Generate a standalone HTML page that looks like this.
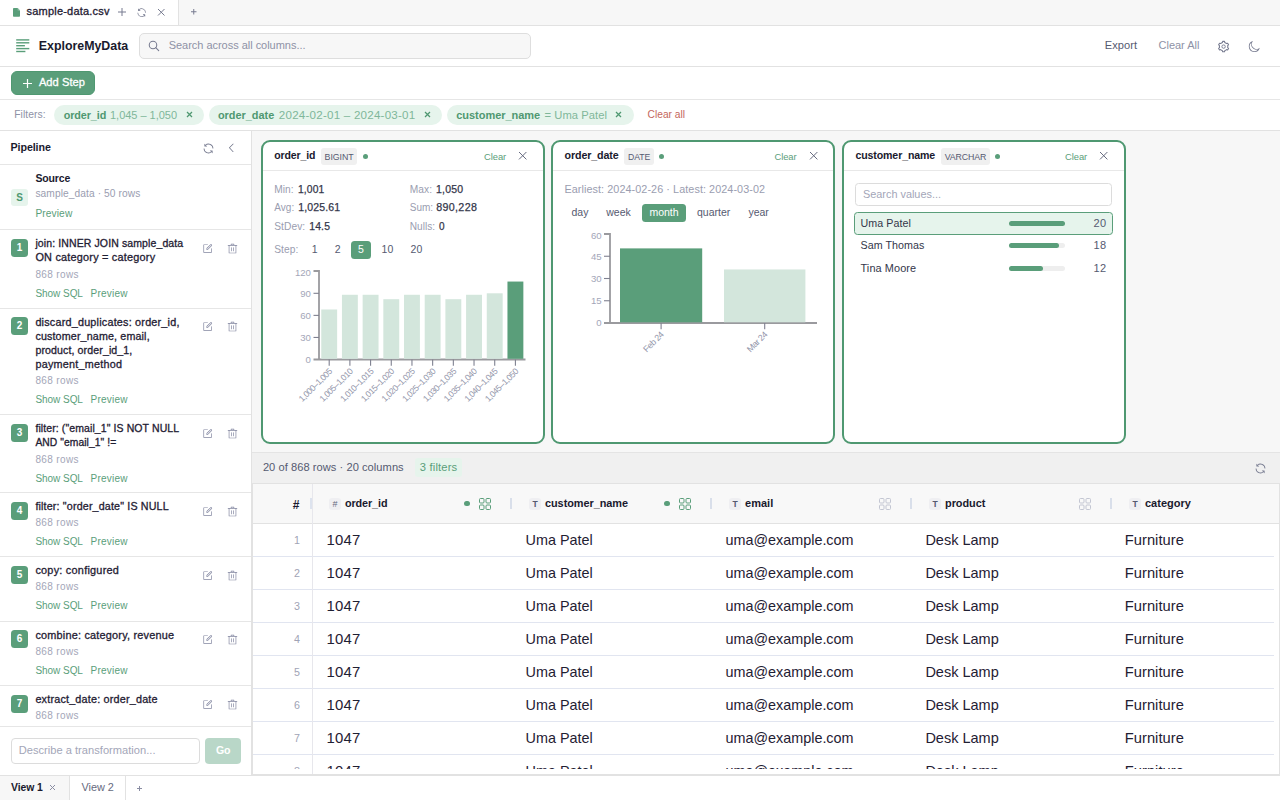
<!DOCTYPE html>
<html>
<head>
<meta charset="utf-8">
<title>ExploreMyData</title>
<style>
*{box-sizing:border-box;margin:0;padding:0}
html,body{width:1280px;height:800px;overflow:hidden;background:#fff}
body{font-family:"Liberation Sans",sans-serif;color:#1f2033;position:relative;font-size:11px}
.abs{position:absolute}
.t{position:absolute;white-space:nowrap;line-height:1}
svg{position:absolute;overflow:visible}
.g{color:#5a9e7a}
.mut{color:#9a9db0}
/* top tab bar */
#tabbar{left:0;top:0;width:1280px;height:26px;background:#f7f7f7;border-bottom:1px solid #e2e2e2}
#tab1{left:0;top:0;width:179px;height:25px;background:#fff;border-right:1px solid #e2e2e2}
/* header */
#header{left:0;top:26px;width:1280px;height:41px;background:#fff;border-bottom:1px solid #e2e2e2}
#search{left:139px;top:33px;width:392px;height:26px;background:#f7f7f7;border:1px solid #dedede;border-radius:5px}
/* toolbar */
#toolbar{left:0;top:67px;width:1280px;height:33px;border-bottom:1px solid #e6e6e6;background:#fff}
#addstep{left:11px;top:71px;width:84px;height:24px;background:#5a9e7a;border:1px solid #4f9871;border-radius:6px}
/* filters */
#filters{left:0;top:100px;width:1280px;height:31px;border-bottom:1px solid #e2e2e2;background:#fff}
.chip{position:absolute;top:105px;height:20px;border-radius:10px;background:#e6f4ec}
/* sidebar */
#sidebar{left:0;top:131px;width:252px;height:644px;background:#fff;border-right:1px solid #e2e2e2}
.hl{position:absolute;left:0;width:251px;height:1px;background:#e6e6e6}
.badge{position:absolute;left:11px;width:17px;height:17.5px;border-radius:3.5px;background:#5a9e7a;color:#fff;font-weight:bold;font-size:10px;text-align:center;line-height:17.5px}
.st{position:absolute;left:35px;font-size:10.5px;line-height:13.5px;color:#1f2033;white-space:nowrap}
.rows{position:absolute;left:35px;font-size:10px;line-height:1;color:#a3a6b8;white-space:nowrap}
.lnk{position:absolute;font-size:10px;line-height:1;color:#5a9e7a;white-space:nowrap}
/* main */
#panels{left:252px;top:131px;width:1028px;height:322px;background:#f7f7f7;border-bottom:1px solid #e4e4e4}
.card{position:absolute;top:140px;width:284px;height:304px;border:2px solid #4f9871;border-radius:9px;background:#fff}
.chead{position:absolute;left:0;top:0;width:280px;height:29px;border-bottom:1px solid #e8e8e8}
.tbadge{position:absolute;background:#f0f0f0;border-radius:3px;font-size:9px;color:#555a70;line-height:16px;height:16px;text-align:center}
#status{left:252px;top:453px;width:1028px;height:31px;background:#f0f0f0;border-bottom:1px solid #e2e2e2}
#table{left:252px;top:484px;width:1028px;height:291px;background:#fff;border-left:1px solid #e2e2e2;border-right:1px solid #e2e2e2;border-bottom:1px solid #e2e2e2;overflow:hidden}
#thead{left:0;top:0;width:1026px;height:40px;background:#f8f8f8;border-bottom:1px solid #e2e2e2}
.row{position:absolute;left:0;width:1021px;height:33px;border-bottom:1px solid #e1e5f0}
.rn{position:absolute;right:973px;top:11px;font-size:11px;color:#a0a3b5;line-height:1}
.c{position:absolute;top:8px;font-size:14px;line-height:16px;color:#1f2033;white-space:nowrap}
#numcol{left:59px;top:0;width:1px;height:291px;background:#e7e7ec}
/* bottom */
#bottombar{left:0;top:775px;width:1280px;height:25px;background:#fff;border-top:1px solid #e2e2e2}
</style>
</head>
<body>
<!-- TAB BAR -->
<div class="abs" id="tabbar"></div>
<div class="abs" id="tab1"></div>
<svg style="left:13px;top:7.9px" width="7" height="8.7" viewBox="0 0 7 8.7"><path d="M0.8 0H4.6L7 2.4V7.9Q7 8.7 6.2 8.7H0.8Q0 8.7 0 7.9V0.8Q0 0 0.8 0Z" fill="#5a9e7a"/><path d="M4.6 0V2.4H7Z" fill="#8fc0a6"/></svg>
<div class="t" style="top:6px;font-size:11.0px;color:#1f2033;left:26.60px;letter-spacing:0.194px;-webkit-text-stroke:0.3px #1f2033;">sample-data.csv</div>
<svg style="left:118.1px;top:8.2px" width="8" height="8" viewBox="0 0 8 8"><path d="M4.0 0V8M0 4.0H8" stroke="#777b90" stroke-width="1.0" fill="none"/></svg>
<svg style="left:135.54px;top:6.54px" width="11.309999999999999" height="11.309999999999999" viewBox="0 0 1024 1024"><path d="M771.776 794.88A384 384 0 0 1 128 512h64a320 320 0 0 0 555.712 216.448H654.72a32 32 0 1 1 0-64h149.056a32 32 0 0 1 32 32v148.928a32 32 0 1 1-64 0v-50.56zM276.288 295.616h92.992a32 32 0 0 1 0 64H220.16a32 32 0 0 1-32-32V178.56a32 32 0 0 1 64 0v50.56A384 384 0 0 1 896.128 512h-64a320 320 0 0 0-555.776-216.384z" fill="#777b90"/></svg>
<svg style="left:158.05px;top:8.95px" width="6.5" height="6.5" viewBox="0 0 6.5 6.5"><path d="M0 0L6.5 6.5M6.5 0L0 6.5" stroke="#777b90" stroke-width="1.0" fill="none"/></svg>
<svg style="left:190.75px;top:9.35px" width="5.5" height="5.5" viewBox="0 0 5.5 5.5"><path d="M2.75 0V5.5M0 2.75H5.5" stroke="#777b90" stroke-width="1.0" fill="none"/></svg>

<!-- HEADER -->
<div class="abs" id="header"></div>
<div class="abs" id="search"></div>
<svg style="left:0;top:0" width="40" height="60" viewBox="0 0 40 60"><rect x="16.2" y="39.20" width="13.1" height="1.4" fill="#5a9e7a"/><rect x="16.2" y="42.10" width="13.1" height="1.4" fill="#5a9e7a"/><rect x="16.2" y="45.00" width="8.7" height="1.4" fill="#5a9e7a"/><rect x="16.2" y="47.90" width="13.1" height="1.4" fill="#5a9e7a"/><rect x="16.2" y="50.80" width="9.2" height="1.4" fill="#5a9e7a"/></svg>
<div class="t" style="top:40px;font-size:12.4px;color:#1a1a2e;left:38.80px;font-weight:bold;letter-spacing:-0.014px;">ExploreMyData</div>
<svg style="left:140px;top:32px" width="30" height="30" viewBox="0 0 30 30"><circle cx="13.0" cy="12.95" r="3.75" fill="none" stroke="#777b90" stroke-width="1.05"/><path d="M15.75 15.7L18.7 18.7" stroke="#777b90" stroke-width="1.1" stroke-linecap="round"/></svg>
<div class="t" style="top:40px;font-size:11.0px;color:#8e92a6;left:168.70px;letter-spacing:-0.027px;">Search across all columns...</div>
<div class="t" style="top:40px;font-size:11.1px;color:#555a70;left:1104.80px;letter-spacing:0.020px;">Export</div>
<div class="t" style="top:40px;font-size:11.0px;color:#8e92a6;left:1158.60px;letter-spacing:-0.029px;">Clear All</div>
<svg style="left:1218.4px;top:40.7px" width="11.2" height="11.2" viewBox="0 0 11.2 11.2"><path d="M3.50 1.96L4.43 1.57L4.66 0.38L6.54 0.38L6.77 1.57L7.70 1.96L7.70 1.96L8.51 2.57L9.65 2.18L10.59 3.80L9.68 4.60L9.80 5.60L9.80 5.60L9.68 6.60L10.59 7.40L9.65 9.02L8.51 8.63L7.70 9.24L7.70 9.24L6.77 9.63L6.54 10.82L4.66 10.82L4.43 9.63L3.50 9.24L3.50 9.24L2.69 8.63L1.55 9.02L0.61 7.40L1.52 6.60L1.40 5.60L1.40 5.60L1.52 4.60L0.61 3.80L1.55 2.18L2.69 2.57L3.50 1.96Z" fill="none" stroke="#777b90" stroke-width="1.05" stroke-linejoin="round"/><circle cx="5.6" cy="5.6" r="1.7" fill="none" stroke="#777b90" stroke-width="0.95"/></svg>
<svg style="left:1247.69px;top:39.51px" width="12.8" height="12.8" viewBox="0 0 1024 1024"><path d="M240.448 240.448a384 384 0 1 0 559.424 525.696 448 448 0 0 1-542.016-542.08 390.592 390.592 0 0 0-17.408 16.384zm181.056 362.048a384 384 0 0 0 525.632 16.384A448 448 0 1 1 405.056 76.8a384 384 0 0 0 16.448 525.696z" fill="#777b90"/></svg>

<!-- TOOLBAR -->
<div class="abs" id="toolbar"></div>
<div class="abs" id="addstep"></div>
<svg style="left:22.7px;top:78.5px" width="9" height="9" viewBox="0 0 9 9"><path d="M4.5 0V9M0 4.5H9" stroke="#fff" stroke-width="1.2" fill="none"/></svg>
<div class="t" style="top:77px;font-size:11.1px;color:#fff;left:38.90px;letter-spacing:0.054px;-webkit-text-stroke:0.3px #fff;">Add Step</div>

<!-- FILTERS -->
<div class="abs" id="filters"></div>
<div class="t" style="top:110px;font-size:10.3px;color:#8e92a6;left:14.25px;letter-spacing:0.069px;">Filters:</div>
<div class="chip" style="left:54px;width:150px"></div>
<div class="t" style="top:110px;font-size:10.8px;color:#4f9871;left:63.75px;font-weight:bold;letter-spacing:-0.095px;">order_id</div>
<div class="t" style="top:110px;font-size:11.0px;color:#7fb79a;left:110.00px;letter-spacing:-0.022px;">1,045 – 1,050</div>
<svg style="left:186.9px;top:112.2px" width="5.0" height="5.0" viewBox="0 0 5.0 5.0"><path d="M0 0L5.0 5.0M5.0 0L0 5.0" stroke="#4f9871" stroke-width="1.25" fill="none"/></svg>
<div class="chip" style="left:209px;width:233px"></div>
<div class="t" style="top:110px;font-size:10.9px;color:#4f9871;left:217.90px;font-weight:bold;letter-spacing:0.006px;">order_date</div>
<div class="t" style="top:109px;font-size:11.6px;color:#7fb79a;left:278.80px;letter-spacing:0.223px;">2024-02-01 – 2024-03-01</div>
<svg style="left:424.5px;top:112.2px" width="5.0" height="5.0" viewBox="0 0 5.0 5.0"><path d="M0 0L5.0 5.0M5.0 0L0 5.0" stroke="#4f9871" stroke-width="1.25" fill="none"/></svg>
<div class="chip" style="left:447px;width:187px"></div>
<div class="t" style="top:110px;font-size:11.0px;color:#4f9871;left:456.25px;font-weight:bold;letter-spacing:-0.032px;">customer_name</div>
<div class="t" style="top:110px;font-size:11.2px;color:#7fb79a;left:544.50px;letter-spacing:0.069px;">= Uma Patel</div>
<svg style="left:615.8px;top:112.2px" width="5.0" height="5.0" viewBox="0 0 5.0 5.0"><path d="M0 0L5.0 5.0M5.0 0L0 5.0" stroke="#4f9871" stroke-width="1.25" fill="none"/></svg>
<div class="t" style="top:110px;font-size:10.2px;color:#c4665c;left:647.50px;letter-spacing:0.032px;">Clear all</div>

<!-- SIDEBAR -->
<div class="abs" id="sidebar"></div>
<div class="t" style="top:142px;font-size:10.7px;color:#1a1a2e;left:10.60px;font-weight:bold;letter-spacing:-0.104px;">Pipeline</div>
<svg style="left:201.50px;top:141.50px" width="13.0" height="13.0" viewBox="0 0 1024 1024"><path d="M771.776 794.88A384 384 0 0 1 128 512h64a320 320 0 0 0 555.712 216.448H654.72a32 32 0 1 1 0-64h149.056a32 32 0 0 1 32 32v148.928a32 32 0 1 1-64 0v-50.56zM276.288 295.616h92.992a32 32 0 0 1 0 64H220.16a32 32 0 0 1-32-32V178.56a32 32 0 0 1 64 0v50.56A384 384 0 0 1 896.128 512h-64a320 320 0 0 0-555.776-216.384z" fill="#777b90"/></svg>
<svg style="left:225.74px;top:142.20px" width="11.6" height="11.6" viewBox="0 0 1024 1024"><path d="M609.408 149.376 277.76 489.6a32 32 0 0 0 0 44.672l331.648 340.352a29.12 29.12 0 0 0 41.728 0 30.592 30.592 0 0 0 0-42.752L339.264 511.936l311.872-319.872a30.592 30.592 0 0 0 0-42.688 29.12 29.12 0 0 0-41.728 0z" fill="#666a80"/></svg>
<div class="hl" style="top:164px"></div>
<div class="t" style="top:173px;font-size:10.5px;color:#1a1a2e;left:35.40px;font-weight:bold;letter-spacing:-0.133px;">Source</div>
<div class="abs" style="left:11px;top:189px;width:17px;height:17px;background:#e6f4ec;border-radius:3px;"></div>
<div class="t" style="top:193px;font-size:10px;color:#4f9871;left:-80.50px;width:200px;text-align:center;font-weight:bold;">S</div>
<div class="t" style="top:189px;font-size:10.2px;color:#9a9db0;left:35.40px;letter-spacing:0.091px;">sample_data · 50 rows</div>
<div class="t" style="top:209px;font-size:10.2px;color:#5a9e7a;left:35.40px;letter-spacing:0.103px;">Preview</div>
<div class="hl" style="top:229px"></div>
<div class="badge" style="top:239px">1</div>
<div class="t" style="top:238px;font-size:10.5px;color:#1f2033;left:35.40px;letter-spacing:0.113px;-webkit-text-stroke:0.3px #1f2033;">join: INNER JOIN sample_data</div>
<div class="t" style="top:252px;font-size:10.9px;color:#1f2033;left:35.40px;letter-spacing:0.208px;-webkit-text-stroke:0.3px #1f2033;">ON category = category</div>
<svg style="left:201.68px;top:242.52px" width="11.2" height="11.2" viewBox="0 0 1024 1024"><path d="M832 512a32 32 0 1 1 64 0v352a32 32 0 0 1-32 32H160a32 32 0 0 1-32-32V160a32 32 0 0 1 32-32h352a32 32 0 0 1 0 64H192v640h640V512z M469.952 554.24l52.8-7.552L847.104 222.4a32 32 0 1 0-45.248-45.248L477.44 501.44l-7.552 52.8zm422.4-422.4a96 96 0 0 1 0 135.808l-331.84 331.84a32 32 0 0 1-18.112 9.088L436.8 623.68a32 32 0 0 1-36.224-36.224l15.104-105.6a32 32 0 0 1 9.024-18.112l331.904-331.84a96 96 0 0 1 135.744 0z" fill="#8286a0"/></svg>
<svg style="left:226.70px;top:242.70px" width="11" height="11" viewBox="0 0 1024 1024"><path d="M160 256H96a32 32 0 0 1 0-64h256V95.936a32 32 0 0 1 32-32h256a32 32 0 0 1 32 32V192h256a32 32 0 1 1 0 64h-64v672a32 32 0 0 1-32 32H192a32 32 0 0 1-32-32V256zm448-64v-64H416v64h192zM224 896h576V256H224v640zm192-128a32 32 0 0 1-32-32V416a32 32 0 0 1 64 0v320a32 32 0 0 1-32 32zm192 0a32 32 0 0 1-32-32V416a32 32 0 0 1 64 0v320a32 32 0 0 1-32 32z" fill="#8286a0"/></svg>
<div class="t" style="top:270px;font-size:10.0px;color:#a3a6b8;left:35.40px;letter-spacing:0.365px;">868 rows</div>
<div class="t" style="top:289px;font-size:10.0px;color:#5a9e7a;left:35.40px;letter-spacing:-0.038px;">Show SQL</div>
<div class="t" style="top:289px;font-size:10.0px;color:#5a9e7a;left:90.60px;letter-spacing:0.219px;">Preview</div>
<div class="hl" style="top:308px"></div>
<div class="badge" style="top:317px">2</div>
<div class="t" style="top:317px;font-size:10.8px;color:#1f2033;left:35.40px;letter-spacing:0.214px;-webkit-text-stroke:0.3px #1f2033;">discard_duplicates: order_id,</div>
<div class="t" style="top:331px;font-size:10.7px;color:#1f2033;left:35.40px;letter-spacing:0.157px;-webkit-text-stroke:0.3px #1f2033;">customer_name, email,</div>
<div class="t" style="top:345px;font-size:10.6px;color:#1f2033;left:35.40px;letter-spacing:0.111px;-webkit-text-stroke:0.3px #1f2033;">product, order_id_1,</div>
<div class="t" style="top:359px;font-size:10.8px;color:#1f2033;left:35.40px;letter-spacing:0.253px;-webkit-text-stroke:0.3px #1f2033;">payment_method</div>
<svg style="left:201.68px;top:320.52px" width="11.2" height="11.2" viewBox="0 0 1024 1024"><path d="M832 512a32 32 0 1 1 64 0v352a32 32 0 0 1-32 32H160a32 32 0 0 1-32-32V160a32 32 0 0 1 32-32h352a32 32 0 0 1 0 64H192v640h640V512z M469.952 554.24l52.8-7.552L847.104 222.4a32 32 0 1 0-45.248-45.248L477.44 501.44l-7.552 52.8zm422.4-422.4a96 96 0 0 1 0 135.808l-331.84 331.84a32 32 0 0 1-18.112 9.088L436.8 623.68a32 32 0 0 1-36.224-36.224l15.104-105.6a32 32 0 0 1 9.024-18.112l331.904-331.84a96 96 0 0 1 135.744 0z" fill="#8286a0"/></svg>
<svg style="left:226.70px;top:320.70px" width="11" height="11" viewBox="0 0 1024 1024"><path d="M160 256H96a32 32 0 0 1 0-64h256V95.936a32 32 0 0 1 32-32h256a32 32 0 0 1 32 32V192h256a32 32 0 1 1 0 64h-64v672a32 32 0 0 1-32 32H192a32 32 0 0 1-32-32V256zm448-64v-64H416v64h192zM224 896h576V256H224v640zm192-128a32 32 0 0 1-32-32V416a32 32 0 0 1 64 0v320a32 32 0 0 1-32 32zm192 0a32 32 0 0 1-32-32V416a32 32 0 0 1 64 0v320a32 32 0 0 1-32 32z" fill="#8286a0"/></svg>
<div class="t" style="top:376px;font-size:10.0px;color:#a3a6b8;left:35.40px;letter-spacing:0.365px;">868 rows</div>
<div class="t" style="top:395px;font-size:10.0px;color:#5a9e7a;left:35.40px;letter-spacing:-0.038px;">Show SQL</div>
<div class="t" style="top:395px;font-size:10.0px;color:#5a9e7a;left:90.60px;letter-spacing:0.219px;">Preview</div>
<div class="hl" style="top:414px"></div>
<div class="badge" style="top:424px">3</div>
<div class="t" style="top:423px;font-size:10.5px;color:#1f2033;left:35.40px;letter-spacing:0.097px;-webkit-text-stroke:0.3px #1f2033;">filter: ("email_1" IS NOT NULL</div>
<div class="t" style="top:438px;font-size:10.3px;color:#1f2033;left:35.40px;letter-spacing:0.073px;-webkit-text-stroke:0.3px #1f2033;">AND "email_1" !=</div>
<svg style="left:201.68px;top:427.52px" width="11.2" height="11.2" viewBox="0 0 1024 1024"><path d="M832 512a32 32 0 1 1 64 0v352a32 32 0 0 1-32 32H160a32 32 0 0 1-32-32V160a32 32 0 0 1 32-32h352a32 32 0 0 1 0 64H192v640h640V512z M469.952 554.24l52.8-7.552L847.104 222.4a32 32 0 1 0-45.248-45.248L477.44 501.44l-7.552 52.8zm422.4-422.4a96 96 0 0 1 0 135.808l-331.84 331.84a32 32 0 0 1-18.112 9.088L436.8 623.68a32 32 0 0 1-36.224-36.224l15.104-105.6a32 32 0 0 1 9.024-18.112l331.904-331.84a96 96 0 0 1 135.744 0z" fill="#8286a0"/></svg>
<svg style="left:226.70px;top:427.70px" width="11" height="11" viewBox="0 0 1024 1024"><path d="M160 256H96a32 32 0 0 1 0-64h256V95.936a32 32 0 0 1 32-32h256a32 32 0 0 1 32 32V192h256a32 32 0 1 1 0 64h-64v672a32 32 0 0 1-32 32H192a32 32 0 0 1-32-32V256zm448-64v-64H416v64h192zM224 896h576V256H224v640zm192-128a32 32 0 0 1-32-32V416a32 32 0 0 1 64 0v320a32 32 0 0 1-32 32zm192 0a32 32 0 0 1-32-32V416a32 32 0 0 1 64 0v320a32 32 0 0 1-32 32z" fill="#8286a0"/></svg>
<div class="t" style="top:455px;font-size:10.0px;color:#a3a6b8;left:35.40px;letter-spacing:0.365px;">868 rows</div>
<div class="t" style="top:474px;font-size:10.0px;color:#5a9e7a;left:35.40px;letter-spacing:-0.038px;">Show SQL</div>
<div class="t" style="top:474px;font-size:10.0px;color:#5a9e7a;left:90.60px;letter-spacing:0.219px;">Preview</div>
<div class="hl" style="top:492px"></div>
<div class="badge" style="top:502px">4</div>
<div class="t" style="top:501px;font-size:10.7px;color:#1f2033;left:35.40px;letter-spacing:0.167px;-webkit-text-stroke:0.3px #1f2033;">filter: "order_date" IS NULL</div>
<svg style="left:201.68px;top:505.52px" width="11.2" height="11.2" viewBox="0 0 1024 1024"><path d="M832 512a32 32 0 1 1 64 0v352a32 32 0 0 1-32 32H160a32 32 0 0 1-32-32V160a32 32 0 0 1 32-32h352a32 32 0 0 1 0 64H192v640h640V512z M469.952 554.24l52.8-7.552L847.104 222.4a32 32 0 1 0-45.248-45.248L477.44 501.44l-7.552 52.8zm422.4-422.4a96 96 0 0 1 0 135.808l-331.84 331.84a32 32 0 0 1-18.112 9.088L436.8 623.68a32 32 0 0 1-36.224-36.224l15.104-105.6a32 32 0 0 1 9.024-18.112l331.904-331.84a96 96 0 0 1 135.744 0z" fill="#8286a0"/></svg>
<svg style="left:226.70px;top:505.70px" width="11" height="11" viewBox="0 0 1024 1024"><path d="M160 256H96a32 32 0 0 1 0-64h256V95.936a32 32 0 0 1 32-32h256a32 32 0 0 1 32 32V192h256a32 32 0 1 1 0 64h-64v672a32 32 0 0 1-32 32H192a32 32 0 0 1-32-32V256zm448-64v-64H416v64h192zM224 896h576V256H224v640zm192-128a32 32 0 0 1-32-32V416a32 32 0 0 1 64 0v320a32 32 0 0 1-32 32zm192 0a32 32 0 0 1-32-32V416a32 32 0 0 1 64 0v320a32 32 0 0 1-32 32z" fill="#8286a0"/></svg>
<div class="t" style="top:518px;font-size:10.0px;color:#a3a6b8;left:35.40px;letter-spacing:0.365px;">868 rows</div>
<div class="t" style="top:537px;font-size:10.0px;color:#5a9e7a;left:35.40px;letter-spacing:-0.038px;">Show SQL</div>
<div class="t" style="top:537px;font-size:10.0px;color:#5a9e7a;left:90.60px;letter-spacing:0.219px;">Preview</div>
<div class="hl" style="top:556px"></div>
<div class="badge" style="top:566px">5</div>
<div class="t" style="top:565px;font-size:10.9px;color:#1f2033;left:35.40px;letter-spacing:0.238px;-webkit-text-stroke:0.3px #1f2033;">copy: configured</div>
<svg style="left:201.68px;top:569.52px" width="11.2" height="11.2" viewBox="0 0 1024 1024"><path d="M832 512a32 32 0 1 1 64 0v352a32 32 0 0 1-32 32H160a32 32 0 0 1-32-32V160a32 32 0 0 1 32-32h352a32 32 0 0 1 0 64H192v640h640V512z M469.952 554.24l52.8-7.552L847.104 222.4a32 32 0 1 0-45.248-45.248L477.44 501.44l-7.552 52.8zm422.4-422.4a96 96 0 0 1 0 135.808l-331.84 331.84a32 32 0 0 1-18.112 9.088L436.8 623.68a32 32 0 0 1-36.224-36.224l15.104-105.6a32 32 0 0 1 9.024-18.112l331.904-331.84a96 96 0 0 1 135.744 0z" fill="#8286a0"/></svg>
<svg style="left:226.70px;top:569.70px" width="11" height="11" viewBox="0 0 1024 1024"><path d="M160 256H96a32 32 0 0 1 0-64h256V95.936a32 32 0 0 1 32-32h256a32 32 0 0 1 32 32V192h256a32 32 0 1 1 0 64h-64v672a32 32 0 0 1-32 32H192a32 32 0 0 1-32-32V256zm448-64v-64H416v64h192zM224 896h576V256H224v640zm192-128a32 32 0 0 1-32-32V416a32 32 0 0 1 64 0v320a32 32 0 0 1-32 32zm192 0a32 32 0 0 1-32-32V416a32 32 0 0 1 64 0v320a32 32 0 0 1-32 32z" fill="#8286a0"/></svg>
<div class="t" style="top:582px;font-size:10.0px;color:#a3a6b8;left:35.40px;letter-spacing:0.365px;">868 rows</div>
<div class="t" style="top:601px;font-size:10.0px;color:#5a9e7a;left:35.40px;letter-spacing:-0.038px;">Show SQL</div>
<div class="t" style="top:601px;font-size:10.0px;color:#5a9e7a;left:90.60px;letter-spacing:0.219px;">Preview</div>
<div class="hl" style="top:621px"></div>
<div class="badge" style="top:630px">6</div>
<div class="t" style="top:630px;font-size:10.9px;color:#1f2033;left:35.40px;letter-spacing:0.200px;-webkit-text-stroke:0.3px #1f2033;">combine: category, revenue</div>
<svg style="left:201.68px;top:633.52px" width="11.2" height="11.2" viewBox="0 0 1024 1024"><path d="M832 512a32 32 0 1 1 64 0v352a32 32 0 0 1-32 32H160a32 32 0 0 1-32-32V160a32 32 0 0 1 32-32h352a32 32 0 0 1 0 64H192v640h640V512z M469.952 554.24l52.8-7.552L847.104 222.4a32 32 0 1 0-45.248-45.248L477.44 501.44l-7.552 52.8zm422.4-422.4a96 96 0 0 1 0 135.808l-331.84 331.84a32 32 0 0 1-18.112 9.088L436.8 623.68a32 32 0 0 1-36.224-36.224l15.104-105.6a32 32 0 0 1 9.024-18.112l331.904-331.84a96 96 0 0 1 135.744 0z" fill="#8286a0"/></svg>
<svg style="left:226.70px;top:633.70px" width="11" height="11" viewBox="0 0 1024 1024"><path d="M160 256H96a32 32 0 0 1 0-64h256V95.936a32 32 0 0 1 32-32h256a32 32 0 0 1 32 32V192h256a32 32 0 1 1 0 64h-64v672a32 32 0 0 1-32 32H192a32 32 0 0 1-32-32V256zm448-64v-64H416v64h192zM224 896h576V256H224v640zm192-128a32 32 0 0 1-32-32V416a32 32 0 0 1 64 0v320a32 32 0 0 1-32 32zm192 0a32 32 0 0 1-32-32V416a32 32 0 0 1 64 0v320a32 32 0 0 1-32 32z" fill="#8286a0"/></svg>
<div class="t" style="top:647px;font-size:10.0px;color:#a3a6b8;left:35.40px;letter-spacing:0.365px;">868 rows</div>
<div class="t" style="top:666px;font-size:10.0px;color:#5a9e7a;left:35.40px;letter-spacing:-0.038px;">Show SQL</div>
<div class="t" style="top:666px;font-size:10.0px;color:#5a9e7a;left:90.60px;letter-spacing:0.219px;">Preview</div>
<div class="hl" style="top:685px"></div>
<div class="badge" style="top:695px">7</div>
<div class="t" style="top:694px;font-size:10.8px;color:#1f2033;left:35.40px;letter-spacing:0.197px;-webkit-text-stroke:0.3px #1f2033;">extract_date: order_date</div>
<svg style="left:201.68px;top:698.52px" width="11.2" height="11.2" viewBox="0 0 1024 1024"><path d="M832 512a32 32 0 1 1 64 0v352a32 32 0 0 1-32 32H160a32 32 0 0 1-32-32V160a32 32 0 0 1 32-32h352a32 32 0 0 1 0 64H192v640h640V512z M469.952 554.24l52.8-7.552L847.104 222.4a32 32 0 1 0-45.248-45.248L477.44 501.44l-7.552 52.8zm422.4-422.4a96 96 0 0 1 0 135.808l-331.84 331.84a32 32 0 0 1-18.112 9.088L436.8 623.68a32 32 0 0 1-36.224-36.224l15.104-105.6a32 32 0 0 1 9.024-18.112l331.904-331.84a96 96 0 0 1 135.744 0z" fill="#8286a0"/></svg>
<svg style="left:226.70px;top:698.70px" width="11" height="11" viewBox="0 0 1024 1024"><path d="M160 256H96a32 32 0 0 1 0-64h256V95.936a32 32 0 0 1 32-32h256a32 32 0 0 1 32 32V192h256a32 32 0 1 1 0 64h-64v672a32 32 0 0 1-32 32H192a32 32 0 0 1-32-32V256zm448-64v-64H416v64h192zM224 896h576V256H224v640zm192-128a32 32 0 0 1-32-32V416a32 32 0 0 1 64 0v320a32 32 0 0 1-32 32zm192 0a32 32 0 0 1-32-32V416a32 32 0 0 1 64 0v320a32 32 0 0 1-32 32z" fill="#8286a0"/></svg>
<div class="t" style="top:711px;font-size:10.0px;color:#a3a6b8;left:35.40px;letter-spacing:0.365px;">868 rows</div>
<div class="abs" style="left:0px;top:726px;width:251px;height:49px;background:#fff;border-top:1px solid #e6e6e6;"></div>
<div class="abs" style="left:11px;top:738px;width:189px;height:26px;background:#fff;border:1px solid #dcdcdc;border-radius:4px;"></div>
<div class="t" style="top:745px;font-size:11.1px;color:#a3a6b8;left:18.70px;letter-spacing:0.020px;">Describe a transformation...</div>
<div class="abs" style="left:205px;top:738px;width:36px;height:26px;background:#b9d7c8;border-radius:4px;"></div>
<div class="t" style="top:745px;font-size:10.6px;color:#fff;left:215.90px;font-weight:bold;letter-spacing:-0.210px;">Go</div>

<!-- MAIN -->
<div class="abs" id="panels"></div>
<div class="card" style="left:261px"><div class="chead"></div></div>
<div class="t" style="top:150px;font-size:10.5px;color:#1a1a2e;left:274.30px;font-weight:bold;letter-spacing:-0.139px;">order_id</div>
<div class="abs" style="left:321.1px;top:148.3px;width:35.9px;height:16.4px;background:#f0f0f0;border-radius:3px;"></div>
<div class="t" style="top:153px;font-size:8.8px;color:#555a70;left:324.60px;letter-spacing:-0.056px;">BIGINT</div>
<div class="abs" style="left:363.0px;top:154.2px;width:5.2px;height:5.2px;background:#5a9e7a;border-radius:3px;"></div>
<div class="t" style="top:152px;font-size:9.4px;color:#5a9e7a;left:484.00px;letter-spacing:-0.053px;">Clear</div>
<svg style="left:519.3px;top:152.4px" width="7.4" height="7.4" viewBox="0 0 7.4 7.4"><path d="M0 0L7.4 7.4M7.4 0L0 7.4" stroke="#666a80" stroke-width="1.0" fill="none"/></svg>
<div class="t" style="top:185px;font-size:10.2px;color:#9a9db0;left:274.25px;letter-spacing:0.045px;">Min:</div>
<div class="t" style="top:185px;font-size:10.3px;color:#33364a;left:298.00px;letter-spacing:0.105px;-webkit-text-stroke:0.25px #33364a;">1,001</div>
<div class="t" style="top:203px;font-size:10.0px;color:#9a9db0;left:274.25px;letter-spacing:0.030px;">Avg:</div>
<div class="t" style="top:202px;font-size:10.5px;color:#33364a;left:298.25px;letter-spacing:0.147px;-webkit-text-stroke:0.25px #33364a;">1,025.61</div>
<div class="t" style="top:222px;font-size:10.2px;color:#9a9db0;left:274.25px;letter-spacing:0.073px;">StDev:</div>
<div class="t" style="top:222px;font-size:10.4px;color:#33364a;left:309.25px;letter-spacing:0.152px;-webkit-text-stroke:0.25px #33364a;">14.5</div>
<div class="t" style="top:185px;font-size:10.2px;color:#9a9db0;left:409.80px;letter-spacing:0.049px;">Max:</div>
<div class="t" style="top:184px;font-size:10.5px;color:#33364a;left:436.10px;letter-spacing:0.185px;-webkit-text-stroke:0.25px #33364a;">1,050</div>
<div class="t" style="top:203px;font-size:10.0px;color:#9a9db0;left:409.80px;letter-spacing:-0.035px;">Sum:</div>
<div class="t" style="top:202px;font-size:10.7px;color:#33364a;left:436.30px;letter-spacing:0.317px;-webkit-text-stroke:0.25px #33364a;">890,228</div>
<div class="t" style="top:222px;font-size:10.1px;color:#9a9db0;left:409.80px;letter-spacing:0.024px;">Nulls:</div>
<div class="t" style="top:222px;font-size:10px;color:#33364a;left:438.90px;-webkit-text-stroke:0.25px #33364a;">0</div>
<div class="t" style="top:245px;font-size:10.2px;color:#9a9db0;left:274.25px;letter-spacing:0.067px;">Step:</div>
<div class="abs" style="left:351px;top:241px;width:20px;height:18px;background:#5a9e7a;border-radius:3.5px;"></div>
<div class="t" style="top:244px;font-size:10.5px;color:#555a70;left:214.75px;width:200px;text-align:center;">1</div>
<div class="t" style="top:244px;font-size:10.5px;color:#555a70;left:237.60px;width:200px;text-align:center;">2</div>
<div class="t" style="top:244px;font-size:10.5px;color:#fff;left:261.00px;width:200px;text-align:center;">5</div>
<div class="t" style="top:244px;font-size:10.5px;color:#555a70;left:287.40px;width:200px;text-align:center;">10</div>
<div class="t" style="top:244px;font-size:10.5px;color:#555a70;left:316.40px;width:200px;text-align:center;">20</div>
<svg style="left:0;top:0" width="1280" height="460" viewBox="0 0 1280 460" font-family="Liberation Sans, sans-serif"><path d="M313.5 271H319V359.5" fill="none" stroke="#9a9a9e" stroke-width="1.8"/><path d="M313.5 359.5H525.5" fill="none" stroke="#9a9a9e" stroke-width="1.8"/><path d="M313.5 337.44H319" stroke="#7f8190" stroke-width="1.1"/><path d="M313.5 315.38H319" stroke="#7f8190" stroke-width="1.1"/><path d="M313.5 293.31H319" stroke="#7f8190" stroke-width="1.1"/><rect x="321.25" y="309.49" width="15.9" height="49.31" fill="#d3e6dc"/><path d="M329.20 359.5V365.7" stroke="#7f8190" stroke-width="1.1"/><text transform="translate(332.90,371.7) rotate(-45)" text-anchor="end" font-size="8.6" fill="#9295aa" textLength="43.2" lengthAdjust="spacing">1,000–1,005</text><rect x="341.94" y="294.78" width="15.9" height="64.02" fill="#d3e6dc"/><path d="M349.89 359.5V365.7" stroke="#7f8190" stroke-width="1.1"/><text transform="translate(353.59,371.7) rotate(-45)" text-anchor="end" font-size="8.6" fill="#9295aa" textLength="43.2" lengthAdjust="spacing">1,005–1,010</text><rect x="362.63" y="294.78" width="15.9" height="64.02" fill="#d3e6dc"/><path d="M370.58 359.5V365.7" stroke="#7f8190" stroke-width="1.1"/><text transform="translate(374.28,371.7) rotate(-45)" text-anchor="end" font-size="8.6" fill="#9295aa" textLength="43.2" lengthAdjust="spacing">1,010–1,015</text><rect x="383.32" y="299.20" width="15.9" height="59.60" fill="#d3e6dc"/><path d="M391.27 359.5V365.7" stroke="#7f8190" stroke-width="1.1"/><text transform="translate(394.97,371.7) rotate(-45)" text-anchor="end" font-size="8.6" fill="#9295aa" textLength="43.2" lengthAdjust="spacing">1,015–1,020</text><rect x="404.01" y="294.78" width="15.9" height="64.02" fill="#d3e6dc"/><path d="M411.96 359.5V365.7" stroke="#7f8190" stroke-width="1.1"/><text transform="translate(415.66,371.7) rotate(-45)" text-anchor="end" font-size="8.6" fill="#9295aa" textLength="43.2" lengthAdjust="spacing">1,020–1,025</text><rect x="424.70" y="294.78" width="15.9" height="64.02" fill="#d3e6dc"/><path d="M432.65 359.5V365.7" stroke="#7f8190" stroke-width="1.1"/><text transform="translate(436.35,371.7) rotate(-45)" text-anchor="end" font-size="8.6" fill="#9295aa" textLength="43.2" lengthAdjust="spacing">1,025–1,030</text><rect x="445.39" y="299.20" width="15.9" height="59.60" fill="#d3e6dc"/><path d="M453.34 359.5V365.7" stroke="#7f8190" stroke-width="1.1"/><text transform="translate(457.04,371.7) rotate(-45)" text-anchor="end" font-size="8.6" fill="#9295aa" textLength="43.2" lengthAdjust="spacing">1,030–1,035</text><rect x="466.08" y="294.78" width="15.9" height="64.02" fill="#d3e6dc"/><path d="M474.03 359.5V365.7" stroke="#7f8190" stroke-width="1.1"/><text transform="translate(477.73,371.7) rotate(-45)" text-anchor="end" font-size="8.6" fill="#9295aa" textLength="43.2" lengthAdjust="spacing">1,035–1,040</text><rect x="486.77" y="293.31" width="15.9" height="65.49" fill="#d3e6dc"/><path d="M494.72 359.5V365.7" stroke="#7f8190" stroke-width="1.1"/><text transform="translate(498.42,371.7) rotate(-45)" text-anchor="end" font-size="8.6" fill="#9295aa" textLength="43.2" lengthAdjust="spacing">1,040–1,045</text><rect x="507.46" y="281.55" width="15.9" height="77.25" fill="#5a9e7a"/><path d="M515.41 359.5V365.7" stroke="#7f8190" stroke-width="1.1"/><text transform="translate(519.11,371.7) rotate(-45)" text-anchor="end" font-size="8.6" fill="#9295aa" textLength="43.2" lengthAdjust="spacing">1,045–1,050</text><text x="310.9" y="363" text-anchor="end" font-size="9.6" fill="#a3a6b8">0</text><text x="310.9" y="341" text-anchor="end" font-size="9.6" fill="#a3a6b8">30</text><text x="310.9" y="319" text-anchor="end" font-size="9.6" fill="#a3a6b8">60</text><text x="310.9" y="297" text-anchor="end" font-size="9.6" fill="#a3a6b8">90</text><text x="310.9" y="276" text-anchor="end" font-size="9.6" fill="#a3a6b8">120</text></svg>
<div class="card" style="left:551px"><div class="chead"></div></div>
<div class="t" style="top:150px;font-size:10.7px;color:#1a1a2e;left:564.50px;font-weight:bold;letter-spacing:-0.110px;">order_date</div>
<div class="abs" style="left:623.9px;top:148.3px;width:29.7px;height:16.4px;background:#f0f0f0;border-radius:3px;"></div>
<div class="t" style="top:153px;font-size:8.7px;color:#555a70;left:628.00px;letter-spacing:-0.090px;">DATE</div>
<div class="abs" style="left:659.1px;top:154.2px;width:5.2px;height:5.2px;background:#5a9e7a;border-radius:3px;"></div>
<div class="t" style="top:152px;font-size:9.4px;color:#5a9e7a;left:774.50px;letter-spacing:-0.073px;">Clear</div>
<svg style="left:810.3px;top:152.4px" width="7.4" height="7.4" viewBox="0 0 7.4 7.4"><path d="M0 0L7.4 7.4M7.4 0L0 7.4" stroke="#666a80" stroke-width="1.0" fill="none"/></svg>
<div class="t" style="top:184px;font-size:10.8px;color:#9a9db0;left:564.50px;letter-spacing:0.077px;">Earliest: 2024-02-26 · Latest: 2024-03-02</div>
<div class="abs" style="left:642px;top:204px;width:44px;height:18px;background:#5a9e7a;border-radius:3.5px;"></div>
<div class="t" style="top:207px;font-size:10.5px;color:#555a70;left:480.00px;width:200px;text-align:center;">day</div>
<div class="t" style="top:207px;font-size:10.5px;color:#555a70;left:518.50px;width:200px;text-align:center;">week</div>
<div class="t" style="top:207px;font-size:10.5px;color:#fff;left:564.00px;width:200px;text-align:center;">month</div>
<div class="t" style="top:207px;font-size:10.5px;color:#555a70;left:613.60px;width:200px;text-align:center;">quarter</div>
<div class="t" style="top:207px;font-size:10.5px;color:#555a70;left:658.60px;width:200px;text-align:center;">year</div>
<svg style="left:0;top:0" width="1280" height="460" viewBox="0 0 1280 460" font-family="Liberation Sans, sans-serif"><path d="M604 234H610V323" fill="none" stroke="#9a9a9e" stroke-width="1.8"/><path d="M604 323H817" fill="none" stroke="#9a9a9e" stroke-width="1.8"/><path d="M604 300.75H610" stroke="#7f8190" stroke-width="1.1"/><path d="M604 278.50H610" stroke="#7f8190" stroke-width="1.1"/><path d="M604 256.25H610" stroke="#7f8190" stroke-width="1.1"/><rect x="620" y="248.39" width="82.2" height="73.91" fill="#5a9e7a"/><path d="M661.10 323V329.2" stroke="#7f8190" stroke-width="1.1"/><text transform="translate(664.50,335) rotate(-45)" text-anchor="end" font-size="8.8" fill="#9295aa" textLength="25" lengthAdjust="spacing">Feb 24</text><rect x="724" y="269.45" width="81.4" height="52.85" fill="#d3e6dc"/><path d="M764.70 323V329.2" stroke="#7f8190" stroke-width="1.1"/><text transform="translate(768.10,335) rotate(-45)" text-anchor="end" font-size="8.8" fill="#9295aa" textLength="25" lengthAdjust="spacing">Mar 24</text><text x="601.7" y="326" text-anchor="end" font-size="9.6" fill="#a3a6b8">0</text><text x="601.7" y="304" text-anchor="end" font-size="9.6" fill="#a3a6b8">15</text><text x="601.7" y="282" text-anchor="end" font-size="9.6" fill="#a3a6b8">30</text><text x="601.7" y="260" text-anchor="end" font-size="9.6" fill="#a3a6b8">45</text><text x="601.7" y="239" text-anchor="end" font-size="9.6" fill="#a3a6b8">60</text></svg>
<div class="card" style="left:842px"><div class="chead"></div></div>
<div class="t" style="top:150px;font-size:10.6px;color:#1a1a2e;left:855.40px;font-weight:bold;letter-spacing:-0.116px;">customer_name</div>
<div class="abs" style="left:941.2px;top:148.3px;width:48.5px;height:16.4px;background:#f0f0f0;border-radius:3px;"></div>
<div class="t" style="top:153px;font-size:8.8px;color:#555a70;left:944.70px;letter-spacing:-0.097px;">VARCHAR</div>
<div class="abs" style="left:995.3px;top:154.2px;width:5.2px;height:5.2px;background:#5a9e7a;border-radius:3px;"></div>
<div class="t" style="top:152px;font-size:9.4px;color:#5a9e7a;left:1065.10px;letter-spacing:-0.073px;">Clear</div>
<svg style="left:1100.1px;top:152.4px" width="7.4" height="7.4" viewBox="0 0 7.4 7.4"><path d="M0 0L7.4 7.4M7.4 0L0 7.4" stroke="#666a80" stroke-width="1.0" fill="none"/></svg>
<div class="abs" style="left:855px;top:183px;width:257px;height:22.5px;background:#fff;border:1px solid #dcdcdc;border-radius:3.5px;"></div>
<div class="t" style="top:189px;font-size:10.9px;color:#a3a6b8;left:863.00px;letter-spacing:-0.010px;">Search values...</div>
<div class="abs" style="left:854px;top:212px;width:259px;height:23px;background:#e6f4ec;border:1px solid #5a9e7a;border-radius:3.5px;"></div>
<div class="t" style="top:218px;font-size:10.7px;color:#33364a;left:860.50px;letter-spacing:0.061px;">Uma Patel</div>
<div class="abs" style="left:1009px;top:221px;width:56px;height:5px;background:#eeeeee;border-radius:2.5px;"></div>
<div class="abs" style="left:1009px;top:221px;width:56.0px;height:5px;background:#5a9e7a;border-radius:2.5px;"></div>
<div class="t" style="top:218px;font-size:11px;color:#555a70;right:173.50px;letter-spacing:0.4px;">20</div>
<div class="t" style="top:240px;font-size:10.7px;color:#33364a;left:860.50px;letter-spacing:0.057px;">Sam Thomas</div>
<div class="abs" style="left:1009px;top:243px;width:56px;height:5px;background:#eeeeee;border-radius:2.5px;"></div>
<div class="abs" style="left:1009px;top:243px;width:50.4px;height:5px;background:#5a9e7a;border-radius:2.5px;"></div>
<div class="t" style="top:240px;font-size:11px;color:#555a70;right:173.50px;letter-spacing:0.4px;">18</div>
<div class="t" style="top:263px;font-size:10.9px;color:#33364a;left:860.50px;letter-spacing:0.107px;">Tina Moore</div>
<div class="abs" style="left:1009px;top:266px;width:56px;height:5px;background:#eeeeee;border-radius:2.5px;"></div>
<div class="abs" style="left:1009px;top:266px;width:33.6px;height:5px;background:#5a9e7a;border-radius:2.5px;"></div>
<div class="t" style="top:263px;font-size:11px;color:#555a70;right:173.50px;letter-spacing:0.4px;">12</div>

<div class="abs" id="status"></div>
<div class="t" style="top:462px;font-size:11.1px;color:#555a70;left:262.90px;letter-spacing:0.054px;">20 of 868 rows · 20 columns</div>
<div class="abs" style="left:414.5px;top:458.3px;width:47.5px;height:18.3px;background:#e6f4ec;border-radius:3px;"></div>
<div class="t" style="top:462px;font-size:11.2px;color:#5a9e7a;left:419.80px;letter-spacing:0.167px;">3 filters</div>
<svg style="left:1253.50px;top:461.70px" width="13.0" height="13.0" viewBox="0 0 1024 1024"><path d="M771.776 794.88A384 384 0 0 1 128 512h64a320 320 0 0 0 555.712 216.448H654.72a32 32 0 1 1 0-64h149.056a32 32 0 0 1 32 32v148.928a32 32 0 1 1-64 0v-50.56zM276.288 295.616h92.992a32 32 0 0 1 0 64H220.16a32 32 0 0 1-32-32V178.56a32 32 0 0 1 64 0v50.56A384 384 0 0 1 896.128 512h-64a320 320 0 0 0-555.776-216.384z" fill="#777b90"/></svg>

<div class="abs" id="table">
<div class="abs" id="thead"></div>
<div class="t" style="top:15px;font-size:12px;color:#1a1a2e;left:39.75px;font-weight:bold;">#</div>
<div class="abs" style="left:57px;top:14px;width:2px;height:11px;background:#dde3ee;"></div>
<div class="abs" style="left:76px;top:14px;width:12px;height:12px;background:#efeff2;border-radius:3px;"></div>
<div class="t" style="top:16px;font-size:9px;color:#666a80;left:-18.00px;width:200px;text-align:center;">#</div>
<div class="t" style="top:14px;font-size:10.8px;color:#1a1a2e;left:92.00px;font-weight:bold;letter-spacing:-0.101px;">order_id</div>
<div class="abs" style="left:211.3px;top:17px;width:5.4px;height:5.4px;background:#5a9e7a;border-radius:3px;"></div>
<svg style="left:226px;top:14px" width="12" height="12" viewBox="0 0 12 12"><rect x="0.5" y="0.5" width="4.5" height="4.5" rx="1" fill="none" stroke="#5a9e7a" stroke-width="1"/><rect x="7" y="0.5" width="4.5" height="4.5" rx="1" fill="none" stroke="#5a9e7a" stroke-width="1"/><rect x="0.5" y="7" width="4.5" height="4.5" rx="1" fill="none" stroke="#5a9e7a" stroke-width="1"/><rect x="7" y="7" width="4.5" height="4.5" rx="1" fill="none" stroke="#5a9e7a" stroke-width="1"/></svg>
<div class="abs" style="left:257px;top:14px;width:2px;height:11px;background:#d9dfea;"></div>
<div class="abs" style="left:276px;top:14px;width:12px;height:12px;background:#efeff2;border-radius:3px;"></div>
<div class="t" style="top:16px;font-size:8.6px;color:#555a70;left:182.00px;width:200px;text-align:center;font-weight:bold;">T</div>
<div class="t" style="top:14px;font-size:10.9px;color:#1a1a2e;left:292.00px;font-weight:bold;letter-spacing:-0.046px;">customer_name</div>
<div class="abs" style="left:411.29999999999995px;top:17px;width:5.4px;height:5.4px;background:#5a9e7a;border-radius:3px;"></div>
<svg style="left:426px;top:14px" width="12" height="12" viewBox="0 0 12 12"><rect x="0.5" y="0.5" width="4.5" height="4.5" rx="1" fill="none" stroke="#5a9e7a" stroke-width="1"/><rect x="7" y="0.5" width="4.5" height="4.5" rx="1" fill="none" stroke="#5a9e7a" stroke-width="1"/><rect x="0.5" y="7" width="4.5" height="4.5" rx="1" fill="none" stroke="#5a9e7a" stroke-width="1"/><rect x="7" y="7" width="4.5" height="4.5" rx="1" fill="none" stroke="#5a9e7a" stroke-width="1"/></svg>
<div class="abs" style="left:457px;top:14px;width:2px;height:11px;background:#d9dfea;"></div>
<div class="abs" style="left:476px;top:14px;width:12px;height:12px;background:#efeff2;border-radius:3px;"></div>
<div class="t" style="top:16px;font-size:8.6px;color:#555a70;left:382.00px;width:200px;text-align:center;font-weight:bold;">T</div>
<div class="t" style="top:14px;font-size:11.0px;color:#1a1a2e;left:492.00px;font-weight:bold;letter-spacing:0.014px;">email</div>
<svg style="left:626px;top:14px" width="12" height="12" viewBox="0 0 12 12"><rect x="0.5" y="0.5" width="4.5" height="4.5" rx="1" fill="none" stroke="#c3c6d2" stroke-width="1"/><rect x="7" y="0.5" width="4.5" height="4.5" rx="1" fill="none" stroke="#c3c6d2" stroke-width="1"/><rect x="0.5" y="7" width="4.5" height="4.5" rx="1" fill="none" stroke="#c3c6d2" stroke-width="1"/><rect x="7" y="7" width="4.5" height="4.5" rx="1" fill="none" stroke="#c3c6d2" stroke-width="1"/></svg>
<div class="abs" style="left:657px;top:14px;width:2px;height:11px;background:#d9dfea;"></div>
<div class="abs" style="left:676px;top:14px;width:12px;height:12px;background:#efeff2;border-radius:3px;"></div>
<div class="t" style="top:16px;font-size:8.6px;color:#555a70;left:582.00px;width:200px;text-align:center;font-weight:bold;">T</div>
<div class="t" style="top:14px;font-size:10.9px;color:#1a1a2e;left:692.00px;font-weight:bold;letter-spacing:-0.024px;">product</div>
<svg style="left:826px;top:14px" width="12" height="12" viewBox="0 0 12 12"><rect x="0.5" y="0.5" width="4.5" height="4.5" rx="1" fill="none" stroke="#c3c6d2" stroke-width="1"/><rect x="7" y="0.5" width="4.5" height="4.5" rx="1" fill="none" stroke="#c3c6d2" stroke-width="1"/><rect x="0.5" y="7" width="4.5" height="4.5" rx="1" fill="none" stroke="#c3c6d2" stroke-width="1"/><rect x="7" y="7" width="4.5" height="4.5" rx="1" fill="none" stroke="#c3c6d2" stroke-width="1"/></svg>
<div class="abs" style="left:857px;top:14px;width:2px;height:11px;background:#d9dfea;"></div>
<div class="abs" style="left:876px;top:14px;width:12px;height:12px;background:#efeff2;border-radius:3px;"></div>
<div class="t" style="top:16px;font-size:8.6px;color:#555a70;left:782.00px;width:200px;text-align:center;font-weight:bold;">T</div>
<div class="t" style="top:14px;font-size:11.0px;color:#1a1a2e;left:892.00px;font-weight:bold;letter-spacing:-0.007px;">category</div>
<svg style="left:1026px;top:14px" width="12" height="12" viewBox="0 0 12 12"><rect x="0.5" y="0.5" width="4.5" height="4.5" rx="1" fill="none" stroke="#c3c6d2" stroke-width="1"/><rect x="7" y="0.5" width="4.5" height="4.5" rx="1" fill="none" stroke="#c3c6d2" stroke-width="1"/><rect x="0.5" y="7" width="4.5" height="4.5" rx="1" fill="none" stroke="#c3c6d2" stroke-width="1"/><rect x="7" y="7" width="4.5" height="4.5" rx="1" fill="none" stroke="#c3c6d2" stroke-width="1"/></svg>
<div class="row" style="top:40px"></div>
<div class="t" style="top:51px;font-size:10.7px;color:#a0a3b5;left:7.00px;width:40px;text-align:right;">1</div>
<div class="t" style="top:49px;font-size:14.9px;color:#1f2033;left:73.50px;letter-spacing:0.188px;">1047</div>
<div class="t" style="top:49px;font-size:14.4px;color:#1f2033;left:272.50px;letter-spacing:0.008px;">Uma Patel</div>
<div class="t" style="top:49px;font-size:14.4px;color:#1f2033;left:472.50px;letter-spacing:-0.011px;">uma@example.com</div>
<div class="t" style="top:49px;font-size:14.5px;color:#1f2033;left:672.40px;letter-spacing:-0.004px;">Desk Lamp</div>
<div class="t" style="top:49px;font-size:14.7px;color:#1f2033;left:871.80px;letter-spacing:0.031px;">Furniture</div>
<div class="row" style="top:73px"></div>
<div class="t" style="top:84px;font-size:10.7px;color:#a0a3b5;left:7.00px;width:40px;text-align:right;">2</div>
<div class="t" style="top:82px;font-size:14.9px;color:#1f2033;left:73.50px;letter-spacing:0.188px;">1047</div>
<div class="t" style="top:82px;font-size:14.4px;color:#1f2033;left:272.50px;letter-spacing:0.008px;">Uma Patel</div>
<div class="t" style="top:82px;font-size:14.4px;color:#1f2033;left:472.50px;letter-spacing:-0.011px;">uma@example.com</div>
<div class="t" style="top:82px;font-size:14.5px;color:#1f2033;left:672.40px;letter-spacing:-0.004px;">Desk Lamp</div>
<div class="t" style="top:82px;font-size:14.7px;color:#1f2033;left:871.80px;letter-spacing:0.031px;">Furniture</div>
<div class="row" style="top:106px"></div>
<div class="t" style="top:117px;font-size:10.7px;color:#a0a3b5;left:7.00px;width:40px;text-align:right;">3</div>
<div class="t" style="top:115px;font-size:14.9px;color:#1f2033;left:73.50px;letter-spacing:0.188px;">1047</div>
<div class="t" style="top:115px;font-size:14.4px;color:#1f2033;left:272.50px;letter-spacing:0.008px;">Uma Patel</div>
<div class="t" style="top:115px;font-size:14.4px;color:#1f2033;left:472.50px;letter-spacing:-0.011px;">uma@example.com</div>
<div class="t" style="top:115px;font-size:14.5px;color:#1f2033;left:672.40px;letter-spacing:-0.004px;">Desk Lamp</div>
<div class="t" style="top:115px;font-size:14.7px;color:#1f2033;left:871.80px;letter-spacing:0.031px;">Furniture</div>
<div class="row" style="top:139px"></div>
<div class="t" style="top:150px;font-size:10.7px;color:#a0a3b5;left:7.00px;width:40px;text-align:right;">4</div>
<div class="t" style="top:148px;font-size:14.9px;color:#1f2033;left:73.50px;letter-spacing:0.188px;">1047</div>
<div class="t" style="top:148px;font-size:14.4px;color:#1f2033;left:272.50px;letter-spacing:0.008px;">Uma Patel</div>
<div class="t" style="top:148px;font-size:14.4px;color:#1f2033;left:472.50px;letter-spacing:-0.011px;">uma@example.com</div>
<div class="t" style="top:148px;font-size:14.5px;color:#1f2033;left:672.40px;letter-spacing:-0.004px;">Desk Lamp</div>
<div class="t" style="top:148px;font-size:14.7px;color:#1f2033;left:871.80px;letter-spacing:0.031px;">Furniture</div>
<div class="row" style="top:172px"></div>
<div class="t" style="top:183px;font-size:10.7px;color:#a0a3b5;left:7.00px;width:40px;text-align:right;">5</div>
<div class="t" style="top:181px;font-size:14.9px;color:#1f2033;left:73.50px;letter-spacing:0.188px;">1047</div>
<div class="t" style="top:181px;font-size:14.4px;color:#1f2033;left:272.50px;letter-spacing:0.008px;">Uma Patel</div>
<div class="t" style="top:181px;font-size:14.4px;color:#1f2033;left:472.50px;letter-spacing:-0.011px;">uma@example.com</div>
<div class="t" style="top:181px;font-size:14.5px;color:#1f2033;left:672.40px;letter-spacing:-0.004px;">Desk Lamp</div>
<div class="t" style="top:181px;font-size:14.7px;color:#1f2033;left:871.80px;letter-spacing:0.031px;">Furniture</div>
<div class="row" style="top:205px"></div>
<div class="t" style="top:216px;font-size:10.7px;color:#a0a3b5;left:7.00px;width:40px;text-align:right;">6</div>
<div class="t" style="top:214px;font-size:14.9px;color:#1f2033;left:73.50px;letter-spacing:0.188px;">1047</div>
<div class="t" style="top:214px;font-size:14.4px;color:#1f2033;left:272.50px;letter-spacing:0.008px;">Uma Patel</div>
<div class="t" style="top:214px;font-size:14.4px;color:#1f2033;left:472.50px;letter-spacing:-0.011px;">uma@example.com</div>
<div class="t" style="top:214px;font-size:14.5px;color:#1f2033;left:672.40px;letter-spacing:-0.004px;">Desk Lamp</div>
<div class="t" style="top:214px;font-size:14.7px;color:#1f2033;left:871.80px;letter-spacing:0.031px;">Furniture</div>
<div class="row" style="top:238px"></div>
<div class="t" style="top:249px;font-size:10.7px;color:#a0a3b5;left:7.00px;width:40px;text-align:right;">7</div>
<div class="t" style="top:247px;font-size:14.9px;color:#1f2033;left:73.50px;letter-spacing:0.188px;">1047</div>
<div class="t" style="top:247px;font-size:14.4px;color:#1f2033;left:272.50px;letter-spacing:0.008px;">Uma Patel</div>
<div class="t" style="top:247px;font-size:14.4px;color:#1f2033;left:472.50px;letter-spacing:-0.011px;">uma@example.com</div>
<div class="t" style="top:247px;font-size:14.5px;color:#1f2033;left:672.40px;letter-spacing:-0.004px;">Desk Lamp</div>
<div class="t" style="top:247px;font-size:14.7px;color:#1f2033;left:871.80px;letter-spacing:0.031px;">Furniture</div>
<div class="row" style="top:271px"></div>
<div class="t" style="top:282px;font-size:10.7px;color:#a0a3b5;left:7.00px;width:40px;text-align:right;">8</div>
<div class="t" style="top:280px;font-size:14.9px;color:#1f2033;left:73.50px;letter-spacing:0.188px;">1047</div>
<div class="t" style="top:280px;font-size:14.4px;color:#1f2033;left:272.50px;letter-spacing:0.008px;">Uma Patel</div>
<div class="t" style="top:280px;font-size:14.4px;color:#1f2033;left:472.50px;letter-spacing:-0.011px;">uma@example.com</div>
<div class="t" style="top:280px;font-size:14.5px;color:#1f2033;left:672.40px;letter-spacing:-0.004px;">Desk Lamp</div>
<div class="t" style="top:280px;font-size:14.7px;color:#1f2033;left:871.80px;letter-spacing:0.031px;">Furniture</div>
<div class="abs" style="left:0px;top:285px;width:1026px;height:6px;background:#fff;"></div>

<div class="abs" id="numcol"></div>
</div>
<!-- BOTTOM -->
<div class="abs" id="bottombar"></div>
<div class="abs" style="left:0px;top:776px;width:70px;height:24px;background:#f7f7f7;border-right:1px solid #e2e2e2;"></div>
<div class="abs" style="left:70px;top:776px;width:56px;height:24px;background:#fff;border-right:1px solid #e2e2e2;"></div>
<div class="t" style="top:783px;font-size:10.4px;color:#1a1a2e;left:11.00px;font-weight:bold;letter-spacing:-0.081px;">View 1</div>
<svg style="left:50.0px;top:784.9px" width="5" height="5" viewBox="0 0 5 5"><path d="M0 0L5 5M5 0L0 5" stroke="#8a8da3" stroke-width="1.0" fill="none"/></svg>
<div class="t" style="top:782px;font-size:10.9px;color:#666a80;left:81.50px;letter-spacing:-0.020px;">View 2</div>
<svg style="left:137.25px;top:785.5px" width="5" height="5" viewBox="0 0 5 5"><path d="M2.5 0V5M0 2.5H5" stroke="#8a8da3" stroke-width="1.0" fill="none"/></svg>

</body>
</html>
